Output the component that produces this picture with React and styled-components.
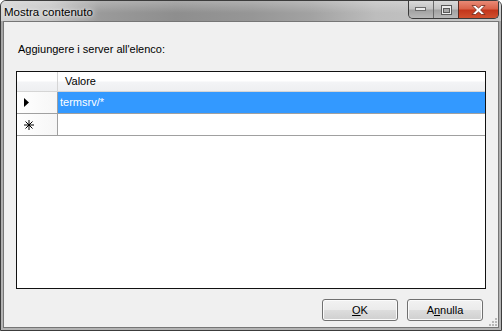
import React from 'react';
import styled, { createGlobalStyle } from 'styled-components';

const GlobalStyle = createGlobalStyle`
  html, body {
    margin: 0;
    padding: 0;
    background: #ffffff;
  }
`;

const Window = styled.div`
  width: 502px;
  height: 331px;
  box-sizing: border-box;
  border: 1px solid #3c3c3c;
  border-radius: 6px 6px 0 0;
  background: linear-gradient(180deg, #a4a4a4 0%, #b4b4b4 100%);
  display: flex;
  flex-direction: column;
  overflow: hidden;
  font-family: "Liberation Sans", Arial, sans-serif;
`;

const TitleBar = styled.div`
  height: 20px;
  display: flex;
  align-items: flex-start;
  padding-left: 3px;
  background:
    linear-gradient(180deg, rgba(255, 255, 255, 0.25) 0%, rgba(255, 255, 255, 0) 60%),
    linear-gradient(90deg, #d2d2d2 0%, #c4c4c4 10%, #9a9a9a 20%, #8e8e8e 35%, #969696 50%, #a2a2a2 62%, #bdbdbd 75%, #c8c8c8 100%);
`;

const Title = styled.div`
  flex: 1;
  font-size: 11.5px;
  line-height: 20px;
  padding-top: 1px;
  color: #000;
  text-shadow: 0 0 6px rgba(255, 255, 255, 0.9), 0 0 3px rgba(255, 255, 255, 0.7);
`;

const Controls = styled.div`
  display: flex;
  flex: none;
  height: 17px;
  margin-right: 2px;
  border: 1px solid #3a3a3a;
  border-top: none;
  border-radius: 0 0 5px 5px;
  overflow: hidden;
  background: #8a8a8a;
`;

const MinMaxButton = styled.div`
  width: 24px;
  height: 17px;
  display: flex;
  align-items: center;
  justify-content: center;
  border-left: ${({ $first }) => ($first ? 'none' : '1px solid #6a6a6a')};
  background: linear-gradient(180deg, #dadada 0%, #c4c4c4 45%, #a2a2a2 55%, #b8b8b8 100%);
`;

const CloseButton = styled.div`
  width: 39px;
  height: 17px;
  display: flex;
  align-items: center;
  justify-content: center;
  border-left: 1px solid #5a2a22;
  background: linear-gradient(180deg, #e98a76 0%, #da644b 45%, #c3361b 55%, #d0502e 100%);
`;

const Client = styled.div`
  flex: 1;
  margin: 0 2px 2px;
  border: 1px solid #767676;
  background: #f0f0f0;
  display: flex;
  flex-direction: column;
  padding: 0 12px;
  position: relative;
`;

const Prompt = styled.div`
  margin-top: 21px;
  padding-left: 2px;
  font-size: 11px;
  line-height: 13px;
  color: #000;
`;

const GridView = styled.div`
  flex: 1;
  margin-top: 15px;
  border: 1px solid #111;
  background: #fff;
  display: flex;
  flex-direction: column;
`;

const GridRow = styled.div`
  display: flex;
  height: ${({ $h }) => $h}px;
  box-sizing: border-box;
`;

const RowHeader = styled.div`
  width: 41px;
  flex: none;
  box-sizing: border-box;
  border-right: 1px solid ${({ $top }) => ($top ? '#d5d5d5' : '#a0a0a0')};
  border-bottom: 1px solid ${({ $top }) => ($top ? '#d5d5d5' : '#a0a0a0')};
  background: ${({ $top }) =>
    $top
      ? 'linear-gradient(180deg, #ffffff 0%, #ffffff 45%, #f3f4f6 55%, #eeeff1 100%)'
      : 'linear-gradient(90deg, #ffffff 0%, #f6f6f6 100%)'};
  display: flex;
  align-items: center;
  padding-left: 7px;
`;

const ColumnHeader = styled.div`
  flex: 1;
  border-bottom: 1px solid #d5d5d5;
  background: linear-gradient(180deg, #ffffff 0%, #ffffff 45%, #f3f4f6 55%, #eeeff1 100%);
  font-size: 11px;
  line-height: 19px;
  padding-left: 7px;
  color: #000;
`;

const Cell = styled.div`
  flex: 1;
  border-bottom: 1px solid #a0a0a0;
  background: ${({ $selected }) => ($selected ? '#3399ff' : '#ffffff')};
  color: ${({ $selected }) => ($selected ? '#ffffff' : '#000000')};
  font-size: 11px;
  line-height: 21px;
  padding-left: 2px;
`;

const Footer = styled.div`
  display: flex;
  justify-content: flex-end;
  gap: 9px;
  margin: 10px 3px 6px 0;
`;

const Button = styled.button`
  width: 76px;
  height: 22px;
  padding: 0;
  border: 1px solid #707070;
  border-radius: 3px;
  background: linear-gradient(180deg, #f2f2f2 0%, #ebebeb 48%, #dddddd 52%, #cfcfcf 100%);
  box-shadow: inset 0 0 0 1px #fbfbfb;
  font-family: "Liberation Sans", Arial, sans-serif;
  font-size: 11px;
  color: #000;
`;

const Grip = styled.svg`
  position: absolute;
  right: 0;
  bottom: 0;
`;

const MinGlyph = () => (
  <svg width="12" height="5" viewBox="0 0 12 5">
    <rect x="0.5" y="0.5" width="10" height="3" fill="#ececec" stroke="#6a6a6a" />
  </svg>
);

const MaxGlyph = () => (
  <svg width="11" height="10" viewBox="0 0 11 10">
    <rect x="0.5" y="0.5" width="10" height="9" fill="#eeeeee" stroke="#5a5a5a" />
    <rect x="2.5" y="3.5" width="6" height="4" fill="#a8a8a8" stroke="#5a5a5a" />
  </svg>
);

const CloseGlyph = () => (
  <svg width="15" height="10" viewBox="0 0 15 10">
    <path
      d="M1 0.5 H4.5 L7.5 3 L10.5 0.5 H14 L9.6 5 L14 9.5 H10.5 L7.5 7 L4.5 9.5 H1 L5.4 5 Z"
      fill="#ffffff"
      stroke="#6a2416"
      strokeWidth="0.8"
      strokeLinejoin="round"
    />
  </svg>
);

const CurrentMarker = () => (
  <svg width="6" height="9" viewBox="0 0 6 9">
    <path d="M0 0 L5 4.5 L0 9 Z" fill="#000" />
  </svg>
);

const NewRowMarker = () => (
  <svg width="10" height="10" viewBox="0 0 10 10">
    <path d="M5 0 V10 M0 5 H10 M1.5 1.5 L8.5 8.5 M8.5 1.5 L1.5 8.5" stroke="#000" strokeWidth="1" />
  </svg>
);

export default function App() {
  return (
    <>
      <GlobalStyle />
      <Window>
        <TitleBar>
          <Title>Mostra contenuto</Title>
          <Controls>
            <MinMaxButton $first>
              <MinGlyph />
            </MinMaxButton>
            <MinMaxButton>
              <MaxGlyph />
            </MinMaxButton>
            <CloseButton>
              <CloseGlyph />
            </CloseButton>
          </Controls>
        </TitleBar>
        <Client>
          <Prompt>Aggiungere i server all'elenco:</Prompt>
          <GridView>
            <GridRow $h={20}>
              <RowHeader $top />
              <ColumnHeader>Valore</ColumnHeader>
            </GridRow>
            <GridRow $h={22}>
              <RowHeader>
                <CurrentMarker />
              </RowHeader>
              <Cell $selected>termsrv/*</Cell>
            </GridRow>
            <GridRow $h={22}>
              <RowHeader>
                <NewRowMarker />
              </RowHeader>
              <Cell />
            </GridRow>
          </GridView>
          <Footer>
            <Button>
              <u>O</u>K
            </Button>
            <Button>
              A<u>n</u>nulla
            </Button>
          </Footer>
          <Grip width="10" height="10" viewBox="0 0 10 10">
            <g fill="#b8b8b8">
              <rect x="7" y="1" width="2" height="2" />
              <rect x="4" y="4" width="2" height="2" />
              <rect x="7" y="4" width="2" height="2" />
              <rect x="1" y="7" width="2" height="2" />
              <rect x="4" y="7" width="2" height="2" />
              <rect x="7" y="7" width="2" height="2" />
            </g>
          </Grip>
        </Client>
      </Window>
    </>
  );
}
